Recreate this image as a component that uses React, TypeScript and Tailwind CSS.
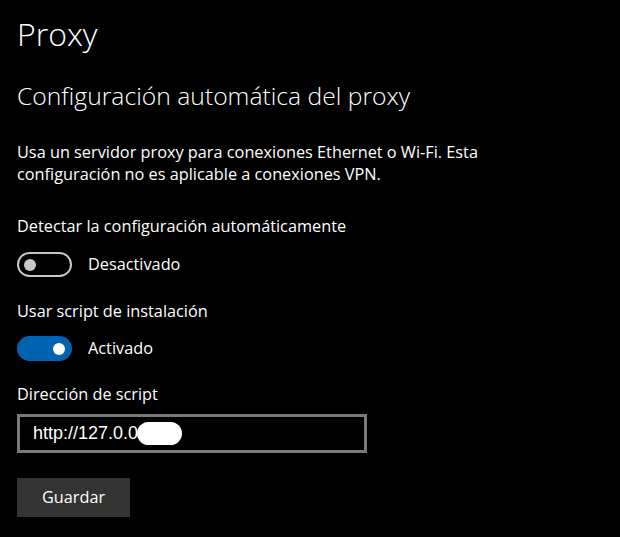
import React, { useState } from "react";

const Toggle = ({ on, onChange }: { on: boolean; onChange: () => void }) => (
  <button
    onClick={onChange}
    className={`relative h-[25px] w-[55px] rounded-full ${
      on ? "bg-[#0063b1] border-[#0063b1]" : "bg-black border-[#c8c8c8]"
    } border-[2.5px]`}
  >
    <span
      className={`absolute top-1/2 h-[12px] w-[12px] -translate-y-1/2 rounded-full ${
        on ? "right-[5px] bg-white" : "left-[5px] bg-[#c8c8c8]"
      }`}
    />
  </button>
);

const App = () => {
  const [detect, setDetect] = useState(false);
  const [useScript, setUseScript] = useState(true);

  return (
    <div className="min-h-[537px] w-[620px] bg-black text-white pl-[17px] font-['Open_Sans',sans-serif]">
      <h1 className="pt-[14px] text-[32px] font-light leading-[40px]">Proxy</h1>

      <h2 className="mt-[27px] text-[24.7px] font-light leading-[30px]">
        Configuración automática del proxy
      </h2>

      <p className="mt-[30px] w-[500px] text-[16.3px] leading-[22px]">
        Usa un servidor proxy para conexiones Ethernet o Wi-Fi. Esta configuración no es aplicable a conexiones VPN.
      </p>

      <p className="mt-[30px] text-[16.3px] leading-[22px]">Detectar la configuración automáticamente</p>
      <div className="mt-[15px] flex items-center gap-[16px]">
        <Toggle on={detect} onChange={() => setDetect(!detect)} />
        <span className="text-[16.3px]">{detect ? "Activado" : "Desactivado"}</span>
      </div>

      <p className="mt-[23px] text-[16.3px] leading-[22px]">Usar script de instalación</p>
      <div className="mt-[14px] flex items-center gap-[16px]">
        <Toggle on={useScript} onChange={() => setUseScript(!useScript)} />
        <span className="text-[16.3px]">{useScript ? "Activado" : "Desactivado"}</span>
      </div>

      <p className="mt-[22px] text-[16.3px] leading-[22px]">Dirección de script</p>
      <div className="mt-[9px] flex h-[39px] w-[350px] items-center border-[3px] border-[#7a7a7a] pl-[13px] text-[18px] font-['Liberation_Sans',sans-serif]">
        <span>http://127.0.0</span>
        <span className="ml-[-1px] h-[23px] w-[45px] rounded-full bg-white" />
      </div>

      <button className="mt-[25px] h-[39px] w-[113px] bg-[#333333] text-[16.3px]">Guardar</button>
    </div>
  );
};

export default App;
